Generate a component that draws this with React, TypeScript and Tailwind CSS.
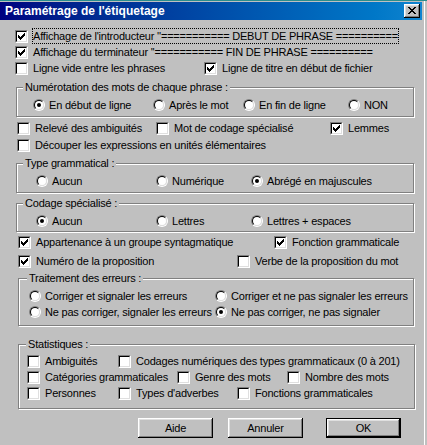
import React from "react";

const CheckMark = () => (
  <svg width="7" height="7" viewBox="0 0 7 7" shapeRendering="crispEdges" className="absolute left-[2px] top-[2px]">
    <path
      d="M6 0h1v1h-1z M5 1h2v1h-2z M0 2h1v1h-1z M4 2h3v1h-3z M0 3h2v1h-2z M3 3h3v1h-3z M0 4h5v1h-5z M1 5h3v1h-3z M2 6h1v1h-1z"
      fill="#000"
    />
  </svg>
);

function Box({ checked }: { checked?: boolean }) {
  return (
    <span className="relative block w-[13px] h-[13px] shrink-0 bg-white border border-t-[#808080] border-l-[#808080] border-b-white border-r-white">
      <span className="absolute inset-0 border border-t-black border-l-black border-b-[#dfdfdf] border-r-[#dfdfdf]" />
      {checked && <CheckMark />}
    </span>
  );
}

function Radio({ checked }: { checked?: boolean }) {
  return (
    <span className="relative block w-[12px] h-[12px] shrink-0 rounded-full border border-t-[#808080] border-l-[#808080] border-b-white border-r-white">
      <span className="absolute inset-0 rounded-full bg-white border border-t-black border-l-black border-b-[#dfdfdf] border-r-[#dfdfdf]" />
      {checked && <span className="absolute left-[3px] top-[3px] w-[4px] h-[4px] rounded-full bg-black" />}
    </span>
  );
}

function CheckItem({ checked, label, className = "" }: { checked?: boolean; label: string; className?: string }) {
  return (
    <div className={"flex items-center shrink-0 " + className}>
      <Box checked={checked} />
      <span className="ml-[5px] whitespace-nowrap">{label}</span>
    </div>
  );
}

function RadioItem({ checked, label, className = "" }: { checked?: boolean; label: string; className?: string }) {
  return (
    <div className={"flex items-center shrink-0 " + className}>
      <Radio checked={checked} />
      <span className="ml-[4px] whitespace-nowrap">{label}</span>
    </div>
  );
}

function Group({
  label,
  labelClass,
  className,
  children,
}: {
  label: string;
  labelClass: string;
  className: string;
  children: React.ReactNode;
}) {
  return (
    <div className={"relative border border-[#808080] shadow-[inset_1px_1px_0_#fff,1px_1px_0_#fff] " + className}>
      <span className={"absolute top-[-7px] px-[2px] bg-[#c0c0c0] leading-[12px] whitespace-nowrap " + labelClass}>
        {label}
      </span>
      {children}
    </div>
  );
}

function Button({ label, isDefault, className = "" }: { label: string; isDefault?: boolean; className?: string }) {
  return (
    <div
      className={
        "w-[75px] h-[20px] flex items-center justify-center bg-[#c0c0c0] shrink-0 " +
        (isDefault
          ? "border border-black shadow-[inset_-1px_-1px_0_#000,inset_1px_1px_0_#fff,inset_-2px_-2px_0_#808080,inset_2px_2px_0_#dfdfdf] "
          : "shadow-[inset_-1px_-1px_0_#000,inset_1px_1px_0_#fff,inset_-2px_-2px_0_#808080,inset_2px_2px_0_#dfdfdf] ") +
        className
      }
    >
      {label}
    </div>
  );
}

export default function App() {
  return (
    <div className="w-[427px] h-[445px] bg-[#c0c0c0] overflow-hidden flex flex-col font-['Liberation_Sans',Arial,sans-serif] text-[11px] tracking-[-0.2px] text-black">
      <div className="h-[1px] bg-[#2a8e8e] shrink-0" />
      <div className="flex flex-1">
        <div className="w-[424px] flex flex-col">
          <div className="h-[1px] shrink-0" />
          {/* Title bar */}
          <div className="w-[422px] h-[18px] shrink-0 flex items-center bg-linear-to-r from-[#000080] to-[#1084d0]">
            <span className="pl-[5px] text-white font-bold text-[12px] tracking-normal whitespace-nowrap">
              Paramétrage de l'étiquetage
            </span>
            <div className="ml-auto mr-[2px] w-[16px] h-[14px] bg-[#c0c0c0] flex items-center justify-center shadow-[inset_-1px_-1px_0_#000,inset_1px_1px_0_#fff,inset_-2px_-2px_0_#808080,inset_2px_2px_0_#dfdfdf]">
              <svg width="8" height="7" viewBox="0 0 8 7" shapeRendering="crispEdges" className="mb-[1px]">
                <path
                  d="M0 0h2v1h-2z M6 0h2v1h-2z M1 1h2v1h-2z M5 1h2v1h-2z M2 2h4v1h-4z M3 3h2v1h-2z M2 4h4v1h-4z M1 5h2v1h-2z M5 5h2v1h-2z M0 6h2v1h-2z M6 6h2v1h-2z"
                  fill="#000"
                />
              </svg>
            </div>
          </div>

          {/* Top checkboxes */}
          <div className="mt-[8px] h-[16px] flex items-center pl-[15px]">
            <Box checked />
            <span className="ml-[4px] border border-dotted border-black leading-[14px] whitespace-nowrap">
              Affichage de l'introducteur ''=========== DEBUT DE PHRASE ==========
            </span>
          </div>
          <div className="h-[16px] flex items-center pl-[15px]">
            <CheckItem checked label="Affichage du terminateur ''=========== FIN DE PHRASE ==========" />
          </div>
          <div className="h-[16px] flex items-center pl-[15px]">
            <CheckItem label="Ligne vide entre les phrases" className="w-[189px]" />
            <CheckItem checked label="Ligne de titre en début de fichier" />
          </div>

          {/* Numérotation */}
          <Group
            label="Numérotation des mots de chaque phrase :"
            labelClass="left-[6px]"
            className="mt-[11px] ml-[16px] w-[398px] h-[30px] pt-[9px]"
          >
            <div className="h-[16px] flex items-center pl-[16px]">
              <RadioItem checked label="En début de ligne" className="w-[120px]" />
              <RadioItem label="Après le mot" className="w-[90px]" />
              <RadioItem label="En fin de ligne" className="w-[105px]" />
              <RadioItem label="NON" />
            </div>
          </Group>

          <div className="mt-[3px] h-[17px] flex items-center pl-[17px]">
            <CheckItem label="Relevé des ambiguités" className="w-[139px]" />
            <CheckItem label="Mot de codage spécialisé" className="w-[174px]" />
            <CheckItem checked label="Lemmes" />
          </div>
          <div className="h-[17px] flex items-center pl-[17px]">
            <CheckItem label="Découper les expressions en unités élémentaires" />
          </div>

          {/* Type grammatical */}
          <Group
            label="Type grammatical :"
            labelClass="left-[6px]"
            className="mt-[9px] ml-[16px] w-[398px] h-[30px] pt-[9px]"
          >
            <div className="h-[16px] flex items-center pl-[19px]">
              <RadioItem label="Aucun" className="w-[120px]" />
              <RadioItem label="Numérique" className="w-[95px]" />
              <RadioItem checked label="Abrégé en majuscules" />
            </div>
          </Group>

          {/* Codage spécialisé */}
          <Group
            label="Codage spécialisé :"
            labelClass="left-[6px]"
            className="mt-[10px] ml-[16px] w-[398px] h-[29px] pt-[9px]"
          >
            <div className="h-[16px] flex items-center pl-[19px]">
              <RadioItem checked label="Aucun" className="w-[120px]" />
              <RadioItem label="Lettres" className="w-[95px]" />
              <RadioItem label="Lettres + espaces" />
            </div>
          </Group>

          <div className="mt-[2px] h-[17px] flex items-center pl-[18px]">
            <CheckItem checked label="Appartenance à un groupe syntagmatique" className="w-[256px]" />
            <CheckItem checked label="Fonction grammaticale" />
          </div>
          <div className="mt-[2px] h-[17px] flex items-center pl-[18px]">
            <CheckItem checked label="Numéro de la proposition" className="w-[219px]" />
            <CheckItem label="Verbe de la proposition du mot" />
          </div>

          {/* Traitement des erreurs */}
          <Group
            label="Traitement des erreurs :"
            labelClass="left-[8px]"
            className="mt-[8px] ml-[18px] w-[396px] h-[48px] pt-[9px]"
          >
            <div className="h-[16px] flex items-center pl-[10px]">
              <RadioItem label="Corriger et signaler les erreurs" className="w-[186px]" />
              <RadioItem label="Corriger et ne pas signaler les erreurs" />
            </div>
            <div className="h-[16px] flex items-center pl-[10px]">
              <RadioItem label="Ne pas corriger, signaler les erreurs" className="w-[186px]" />
              <RadioItem checked label="Ne pas corriger, ne pas signaler" />
            </div>
          </Group>

          {/* Statistiques */}
          <Group
            label="Statistiques :"
            labelClass="left-[7px]"
            className="mt-[18px] ml-[18px] w-[397px] h-[65px] pt-[8px]"
          >
            <div className="h-[16px] flex items-center pl-[8px]">
              <CheckItem label="Ambiguités" className="w-[91px]" />
              <CheckItem label="Codages numériques des types grammaticaux (0 à 201)" />
            </div>
            <div className="h-[16px] flex items-center pl-[8px]">
              <CheckItem label="Catégories grammaticales" className="w-[150px]" />
              <CheckItem label="Genre des mots" className="w-[110px]" />
              <CheckItem label="Nombre des mots" />
            </div>
            <div className="h-[16px] flex items-center pl-[8px]">
              <CheckItem label="Personnes" className="w-[91px]" />
              <CheckItem label="Types d'adverbes" className="w-[119px]" />
              <CheckItem label="Fonctions grammaticales" />
            </div>
          </Group>

          {/* Buttons */}
          <div className="mt-[9px] flex pl-[138px]">
            <Button label="Aide" />
            <Button label="Annuler" className="ml-[15px]" />
            <Button label="OK" isDefault className="ml-[23px]" />
          </div>
        </div>
        <div className="w-[1px] bg-white" />
        <div className="flex-1" />
      </div>
    </div>
  );
}
